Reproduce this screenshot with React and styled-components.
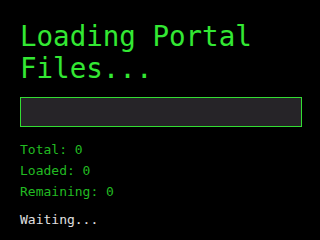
import React from 'react'
import styled, { createGlobalStyle } from 'styled-components'

const GlobalStyle = createGlobalStyle`
  html, body {
    margin: 0;
    padding: 0;
    background: #000;
  }
`;

const Screen = styled.div`
  width: 320px;
  height: 240px;
  box-sizing: border-box;
  padding: 20px 18px 0 20px;
  background: #000;
  font-family: "DejaVu Sans Mono", monospace;
  overflow: hidden;
`;

const Title = styled.h1`
  margin: 0;
  font-size: 27.5px;
  line-height: 32px;
  font-weight: normal;
  color: #33e833;
`;

const Bar = styled.div`
  margin-top: 13px;
  height: 28px;
  border: 1px solid #33dd33;
  background: #262428;
`;

const Stats = styled.div`
  margin-top: 12px;
  display: flex;
  flex-direction: column;
`;

const Stat = styled.div`
  font-size: 13px;
  line-height: 21px;
  color: #22bb22;
`;

const Status = styled.div`
  margin-top: 7px;
  font-size: 13px;
  line-height: 21px;
  color: #e0e0e0;
`;

export default function App() {
  return (
    <>
      <GlobalStyle />
      <Screen>
        <Title>Loading Portal Files...</Title>
        <Bar />
        <Stats>
          <Stat>Total: 0</Stat>
          <Stat>Loaded: 0</Stat>
          <Stat>Remaining: 0</Stat>
        </Stats>
        <Status>Waiting...</Status>
      </Screen>
    </>
  )
}
